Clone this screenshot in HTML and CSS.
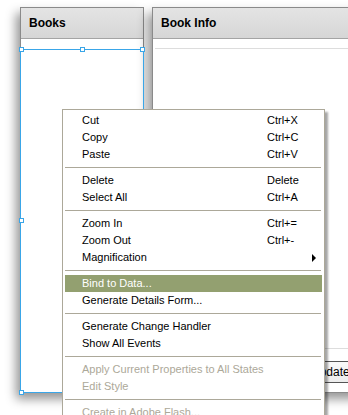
FILE: index.html
```html
<!DOCTYPE html>
<html>
<head>
<meta charset="utf-8">
<link rel="stylesheet" href="styles.css">
</head>
<body>
<div class="stage">
  <section class="panel panel-books">
    <div class="panel-head">Books</div>
    <div class="panel-body">
      <div class="sel">
        <span class="handle h-tl"></span>
        <span class="handle h-tm"></span>
        <span class="handle h-tr"></span>
        <span class="handle h-ml"></span>
        <span class="handle h-bl"></span>
      </div>
    </div>
  </section>
  <section class="panel panel-info">
    <div class="panel-head">Book Info</div>
    <div class="panel-body info-body">
      <div class="form"></div>
      <div class="form-foot"><button class="btn">Update</button></div>
    </div>
  </section>
</div>

<div class="menu">
  <div class="item"><span>Cut</span><span>Ctrl+X</span></div>
  <div class="item"><span>Copy</span><span>Ctrl+C</span></div>
  <div class="item"><span>Paste</span><span>Ctrl+V</span></div>
  <div class="sep"></div>
  <div class="item"><span>Delete</span><span>Delete</span></div>
  <div class="item"><span>Select All</span><span>Ctrl+A</span></div>
  <div class="sep"></div>
  <div class="item"><span>Zoom In</span><span>Ctrl+=</span></div>
  <div class="item"><span>Zoom Out</span><span>Ctrl+-</span></div>
  <div class="item"><span>Magnification</span><span></span><span class="arrow"></span></div>
  <div class="sep"></div>
  <div class="item active"><span>Bind to Data...</span><span></span></div>
  <div class="item"><span>Generate Details Form...</span><span></span></div>
  <div class="sep"></div>
  <div class="item"><span>Generate Change Handler</span><span></span></div>
  <div class="item"><span>Show All Events</span><span></span></div>
  <div class="sep"></div>
  <div class="item disabled"><span>Apply Current Properties to All States</span><span></span></div>
  <div class="item disabled"><span>Edit Style</span><span></span></div>
  <div class="sep"></div>
  <div class="item disabled"><span>Create in Adobe Flash...</span><span></span></div>
</div>
</body>
</html>
```

FILE: styles.css
```css
* { box-sizing: border-box; }

html, body {
  margin: 0;
  width: 348px;
  height: 415px;
  overflow: hidden;
  background: #ffffff;
  font-family: "Liberation Sans", Arial, sans-serif;
}

.stage {
  display: flex;
  align-items: flex-start;
  gap: 8px;
  padding: 7px 0 0 20px;
  width: 600px;
}

.panel {
  flex-shrink: 0;
  height: 386px;
  display: flex;
  flex-direction: column;
  background: #ffffff;
  border: 1px solid #8a8a8a;
  box-shadow: -4px 6px 10px rgba(0, 0, 0, 0.42);
}

.panel-books { width: 124px; }
.panel-info { width: 240px; }

.panel-head {
  height: 31px;
  flex-shrink: 0;
  padding-left: 8px;
  line-height: 30px;
  font-size: 12px;
  font-weight: bold;
  color: #000;
  background: linear-gradient(#e4e4e4, #d6d6d6);
  border-bottom: 1px solid #a4a4a4;
}

.panel-body {
  flex: 1;
  display: flex;
  flex-direction: column;
  padding-top: 10px;
}

.sel {
  position: relative;
  flex: 1;
  margin: 0 -1px -1px -1px;
  border: 1px solid #3aa6e8;
}

.handle {
  position: absolute;
  width: 5px;
  height: 5px;
  background: #ffffff;
  border: 1px solid #3aa6e8;
}
.h-tl { left: -2px; top: -3px; }
.h-tm { left: 59px; top: -3px; }
.h-tr { right: -2px; top: -3px; }
.h-ml { left: -2px; top: 168px; }
.h-bl { left: -2px; bottom: -3px; }

.info-body {
  padding: 9px 2px 0 2px;
}

.form {
  flex: 1;
  border-top: 1px solid #dddddd;
}

.form-foot {
  border-top: 1px solid #dddddd;
  padding: 12px 0 9px 145px;
}

.btn {
  height: 22px;
  padding: 0 10px;
  font-family: "Liberation Sans", Arial, sans-serif;
  font-size: 12px;
  color: #000;
  background: linear-gradient(#fafafa, #ececec);
  border: 1px solid #555555;
  border-radius: 0;
}

.menu {
  position: absolute;
  left: 62px;
  top: 109px;
  width: 263px;
  height: 330px;
  padding: 2px 2px 0 2px;
  background: #ffffff;
  border: 1px solid #aca899;
  box-shadow: 3px 3px 2px rgba(0, 0, 0, 0.35);
  font-size: 11px;
  color: #000;
}

.item {
  display: grid;
  grid-template-columns: 185px 1fr 6px;
  height: 17px;
  line-height: 17px;
  padding: 0 4px 0 17px;
  white-space: nowrap;
}

.item.active {
  background: #93a070;
  color: #ffffff;
}

.item.disabled { color: #aca899; }

.arrow {
  align-self: center;
  width: 0;
  height: 0;
  border-top: 4px solid transparent;
  border-bottom: 4px solid transparent;
  border-left: 4px solid #000;
}

.sep {
  height: 1px;
  margin: 4px 1px 4px 0;
  background: #aca899;
}
```
